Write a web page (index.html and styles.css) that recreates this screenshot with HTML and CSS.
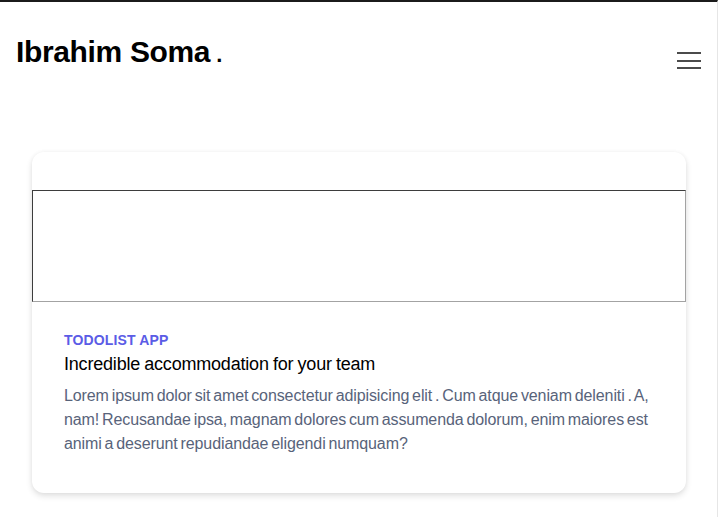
FILE: index.html
```html
<!DOCTYPE html>
<html lang="en">
<head>
<meta charset="utf-8">
<title>Ibrahim Soma</title>
<link rel="stylesheet" href="styles.css">
</head>
<body>
<div class="page">
  <header class="site-header">
    <h1 class="brand">Ibrahim Soma<span class="dot"> .</span></h1>
    <button class="menu" aria-label="Menu">
      <svg width="24" height="20" viewBox="0 0 24 20"><path d="M0 1h24M0 9h24M0 16h24" stroke="#111" stroke-width="1.6" fill="none"/></svg>
    </button>
  </header>
  <main class="main">
    <article class="card">
      <div class="frame"></div>
      <div class="card-body">
        <div class="label">TODOLIST APP</div>
        <h2 class="title">Incredible accommodation for your team</h2>
        <p class="desc">Lorem ipsum dolor sit amet consectetur adipisicing elit . Cum atque veniam deleniti . A, nam! Recusandae ipsa, magnam dolores cum assumenda dolorum, enim maiores est animi a deserunt repudiandae eligendi numquam?</p>
      </div>
    </article>
  </main>
</div>
</body>
</html>
```
FILE: styles.css
```css
html, body { margin: 0; padding: 0; background: #fff; }
body { font-family: "Liberation Sans", Arial, sans-serif; color: #111; }
.page {
  width: 717px;
  min-height: 515px;
  border-top: 2px solid #1b1b1b;
  border-right: 1px solid #e6e6e6;
}
.site-header {
  display: flex;
  justify-content: space-between;
  align-items: flex-start;
  padding: 32px 16px 0 16px;
  height: 36px;
}
.brand {
  margin: 0;
  font-size: 30px;
  line-height: 36px;
  font-weight: 700;
  letter-spacing: -0.35px;
  color: #000;
}
.brand .dot { font-size: 22px; letter-spacing: 0; }
.menu {
  margin-top: 18px;
  margin-right: 0;
  padding: 0;
  border: 0;
  background: none;
  display: block;
  width: 24px;
  height: 20px;
}
.menu svg { display: block; }
.main { padding: 82px 32px 0 32px; }
.card {
  width: 654px;
  border-radius: 12px;
  background: #fff;
  box-shadow: 0 3px 6px rgba(0,0,0,0.12), 0 0 4px rgba(0,0,0,0.04);
  padding-top: 38px;
}
.frame {
  height: 110px;
  border-top: 1px solid #3d3d3d;
  border-left: 1px solid #3d3d3d;
  border-bottom: 1px solid #a3a3a3;
  border-right: 1px solid #a3a3a3;
}
.card-body { padding: 28px 32px 37px 32px; }
.label {
  font-size: 14px;
  line-height: 20px;
  font-weight: 700;
  color: #5b5ce6;
  letter-spacing: 0.15px;
}
.title {
  margin: 0;
  font-size: 18px;
  line-height: 28px;
  font-weight: 400;
  color: #000;
  letter-spacing: -0.2px;
  word-spacing: -0.6px;
}
.desc {
  margin: 6px 0 0 0;
  font-size: 16px;
  line-height: 24px;
  color: #58637a;
  letter-spacing: -0.1px;
  word-spacing: -1.5px;
}
```
